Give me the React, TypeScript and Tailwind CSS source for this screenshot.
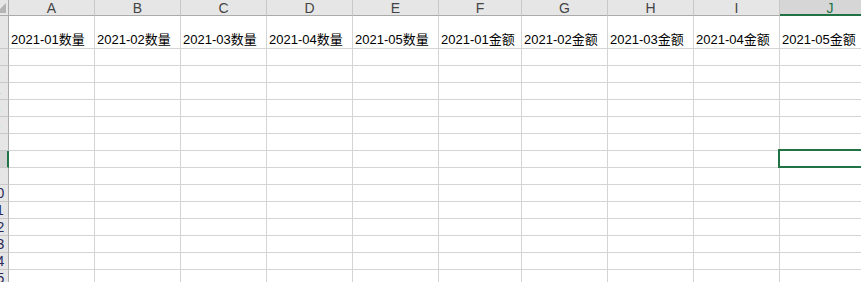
import React from "react";

const FONT = { fontFamily: '"Liberation Sans", Arial, "Noto Sans CJK SC", sans-serif' };

const columns = [
  { key: "A", w: "w-[86px]", label: "2021-01数量" },
  { key: "B", w: "w-[86px]", label: "2021-02数量" },
  { key: "C", w: "w-[86px]", label: "2021-03数量" },
  { key: "D", w: "w-[86px]", label: "2021-04数量" },
  { key: "E", w: "w-[86px]", label: "2021-05数量" },
  { key: "F", w: "w-[83px]", label: "2021-01金额" },
  { key: "G", w: "w-[86px]", label: "2021-02金额" },
  { key: "H", w: "w-[86px]", label: "2021-03金额" },
  { key: "I", w: "w-[86px]", label: "2021-04金额" },
  { key: "J", w: "w-[100px]", label: "2021-05金额" },
];

const SELECTED_ROW = 8;
const SELECTED_COL = "J";

const RowHeader: React.FC<{ n: number; tall?: boolean }> = ({ n, tall }) => {
  const active = n === SELECTED_ROW;
  return (
    <div
      className={`${tall ? "h-[33px]" : "h-[17px]"} w-[9px] shrink-0 overflow-hidden flex justify-end items-center border-b border-[#c8c8c8] ${
        active ? "bg-[#d2d2d2] border-r-2 border-r-[#217346]" : "bg-[#e6e6e6] border-r border-r-[#ababab]"
      }`}
    >
      <div className="w-[23px] shrink-0 text-center text-[14px] leading-[16px] text-[#2a2a5a]">{n}</div>
    </div>
  );
};

const App: React.FC = () => {
  const rows = Array.from({ length: 14 }, (_, i) => i + 2);

  return (
    <div className="w-[861px] h-[282px] overflow-hidden bg-white select-none" style={FONT}>
      {/* column headers */}
      <div className="flex h-[16px]">
        <div className="w-[9px] shrink-0 bg-[#e6e6e6] border-r border-b border-[#ababab] flex items-end">
          <svg width="8" height="15" viewBox="0 0 8 15" className="block">
            <polygon points="-4,13 6,3 6,13" fill="#b4b4b4" />
          </svg>
        </div>
        {columns.map((c) =>
          c.key === SELECTED_COL ? (
            <div
              key={c.key}
              className={`${c.w} shrink-0 h-[16px] bg-[#d6d6d6] border-b-2 border-[#217346] text-center text-[14px] leading-[16px] text-[#217346]`}
            >
              {c.key}
            </div>
          ) : (
            <div
              key={c.key}
              className={`${c.w} shrink-0 h-[16px] bg-[#e6e6e6] border-r border-r-[#c8c8c8] border-b border-b-[#ababab] text-center text-[14px] leading-[16px] text-[#444]`}
            >
              {c.key}
            </div>
          )
        )}
      </div>

      {/* row 1 with titles */}
      <div className="flex">
        <RowHeader n={1} tall />
        {columns.map((c) => (
          <div
            key={c.key}
            className={`${c.w} shrink-0 h-[33px] border-r border-b border-[#d4d4d4] flex items-end pl-[2px] pb-[1px] text-[13px] leading-[15px] text-black whitespace-nowrap`}
          >
            {c.label}
          </div>
        ))}
      </div>

      {rows.map((n) => (
        <div key={n} className="flex">
          <RowHeader n={n} />
          {columns.map((c) => (
            <div key={c.key} className={`${c.w} shrink-0 h-[17px] border-r border-b border-[#d4d4d4] relative`}>
              {n === SELECTED_ROW && c.key === SELECTED_COL && (
                <div className="absolute -left-[2px] -top-[2px] -right-[1px] -bottom-[1px] border-2 border-[#217346]" />
              )}
            </div>
          ))}
        </div>
      ))}
    </div>
  );
};

export default App;
